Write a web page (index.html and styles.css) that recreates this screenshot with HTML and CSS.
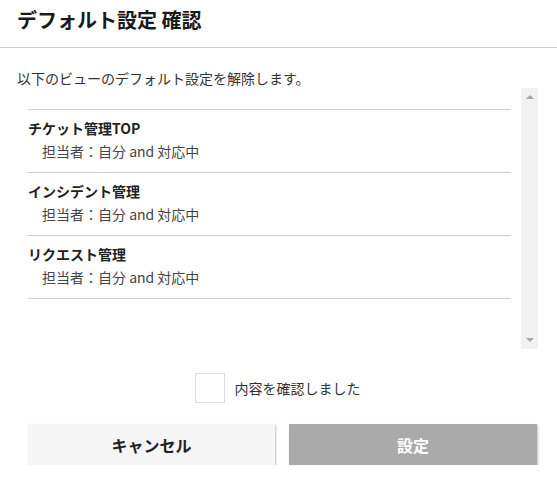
FILE: index.html
```html
<!DOCTYPE html>
<html lang="ja">
<head>
<meta charset="utf-8">
<link rel="stylesheet" href="styles.css">
</head>
<body>
<div class="dialog">
  <header class="dlg-header">デフォルト設定 確認</header>
  <div class="dlg-body">
    <p class="desc">以下のビューのデフォルト設定を解除します。</p>
    <div class="scroll">
      <ul class="views">
        <li class="view">
          <div class="view-name">チケット管理TOP</div>
          <div class="view-cond">担当者：自分 and 対応中</div>
        </li>
        <li class="view">
          <div class="view-name">インシデント管理</div>
          <div class="view-cond">担当者：自分 and 対応中</div>
        </li>
        <li class="view">
          <div class="view-name">リクエスト管理</div>
          <div class="view-cond">担当者：自分 and 対応中</div>
        </li>
      </ul>
      <div class="scrollbar">
        <span class="arrow up"></span>
        <span class="arrow down"></span>
      </div>
    </div>
    <label class="confirm">
      <span class="box"></span>
      <span class="confirm-text">内容を確認しました</span>
    </label>
    <div class="actions">
      <button class="btn btn-cancel">キャンセル</button>
      <button class="btn btn-ok" disabled>設定</button>
    </div>
  </div>
</div>
</body>
</html>
```
FILE: styles.css
```css
* { box-sizing: border-box; }
html, body {
  margin: 0;
  padding: 0;
  background: #fff;
}
body {
  font-family: "Noto Sans CJK JP", "Noto Sans", sans-serif;
  color: #333;
}
.dialog {
  width: 557px;
}
.dlg-header {
  height: 48px;
  padding: 0 0 0 17px;
  font-size: 20px;
  font-weight: 700;
  line-height: 40px;
  color: #1a1a1a;
  border-bottom: 1px solid #cfcfcf;
}
.dlg-body {
  padding: 0 19px 0 17px;
}
.desc {
  margin: 20px 0 0;
  font-size: 14px;
  line-height: 20px;
  color: #333;
}
.scroll {
  display: flex;
  height: 261px;
}
.views {
  list-style: none;
  margin: 21px 0 0 11px;
  padding: 0;
  flex: 1;
  align-self: flex-start;
  border-top: 1px solid #cfcfcf;
}
.view {
  padding: 7px 0 8px;
  border-bottom: 1px solid #cfcfcf;
  height: 63px;
}
.view-name {
  font-size: 14px;
  font-weight: 700;
  line-height: 23px;
  color: #222;
}
.view-cond {
  font-size: 14px;
  line-height: 23px;
  padding-left: 14px;
  color: #444;
}
.scrollbar {
  width: 17px;
  margin-left: 10px;
  background: #f1f1f1;
  display: flex;
  flex-direction: column;
  justify-content: space-between;
  align-items: center;
  padding: 7px 0 7px;
}
.arrow {
  width: 0;
  height: 0;
  border-left: 4px solid transparent;
  border-right: 4px solid transparent;
}
.arrow.up { border-bottom: 4px solid #a8a8a8; }
.arrow.down { border-top: 4px solid #a8a8a8; }
.confirm {
  display: flex;
  align-items: center;
  justify-content: center;
  gap: 10px;
  margin-top: 24px;
  height: 30px;
}
.box {
  width: 30px;
  height: 30px;
  border: 1px solid #dcdcdc;
  background: #fff;
}
.confirm-text {
  font-size: 14px;
  line-height: 20px;
  color: #333;
}
.actions {
  display: grid;
  grid-template-columns: 247px 248px;
  gap: 14px;
  margin: 21px 0 0 11px;
}
.btn {
  height: 41px;
  border: none;
  font-family: inherit;
  font-size: 16px;
  font-weight: 700;
  box-shadow: 1px 1px 2px rgba(0,0,0,0.25);
}
.btn-cancel {
  background: #f5f5f5;
  color: #222;
}
.btn-ok {
  background: #aaaaaa;
  color: #fff;
}
```
